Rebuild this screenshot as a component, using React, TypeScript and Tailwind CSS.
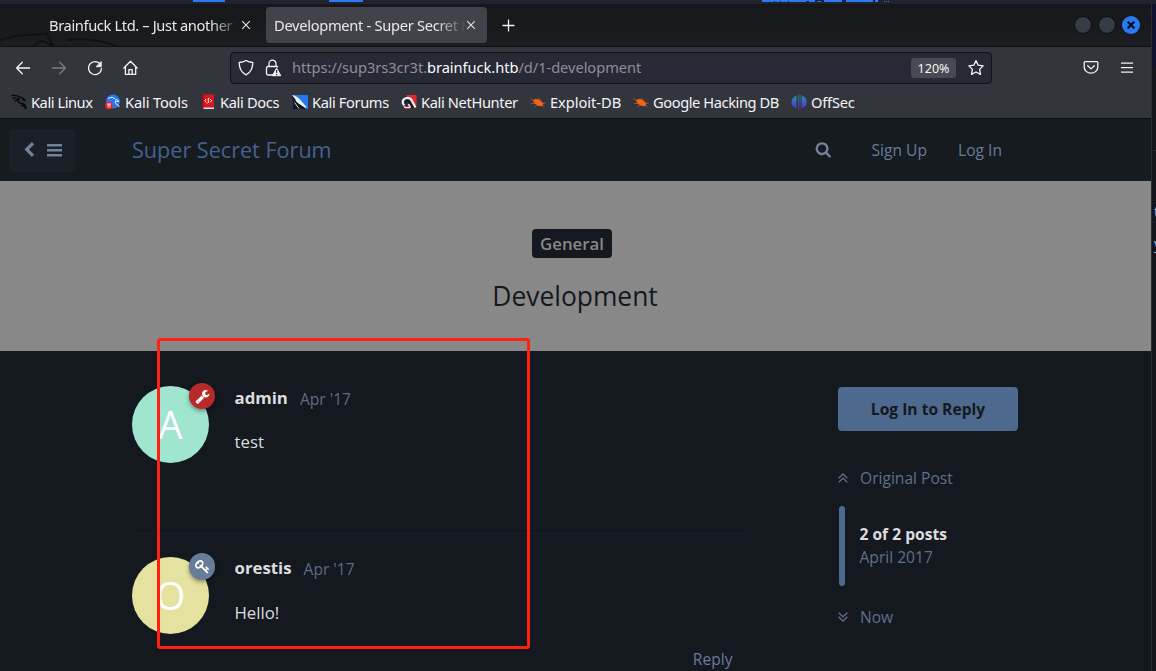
import React from "react";

const SEARCH =
  "M1216 832q0-185-131.5-316.5t-316.5-131.5-316.5 131.5-131.5 316.5 131.5 316.5 316.5 131.5 316.5-131.5 131.5-316.5zm512 832q0 52-38 90t-90 38q-54 0-90-38l-343-342q-179 124-399 124-143 0-273.5-55.5t-225-150-150-225-55.5-273.5 55.5-273.5 150-225 225-150 273.5-55.5 273.5 55.5 225 150 150 225 55.5 273.5q0 220-124 399l343 343q37 37 37 90z";
const CHEVRON =
  "M1427 301l-531 531 531 531q19 19 19 45t-19 45l-166 166q-19 19-45 19t-45-19l-742-742q-19-19-19-45t19-45l742-742q19-19 45-19t45 19l166 166q19 19 19 45t-19 45z";
const WRENCH =
  "M448 1472q0-26-19-45t-45-19-45 19-19 45 19 45 45 19 45-19 19-45zm644-420l-682 682q-37 37-90 37-52 0-91-37l-106-108q-38-36-38-90 0-53 38-91l681-681q39 98 114.5 173.5t173.5 114.5zm634-435q0 39-23 106-47 134-164.5 217.5t-258.5 83.5q-185 0-316.5-131.5t-131.5-316.5 131.5-316.5 316.5-131.5q58 0 121.5 16.5t107.5 46.5q16 11 16 28t-16 28l-293 169v224l193 107q5-3 79-48.5t135.5-81 70.5-35.5q15 0 23.5 10t8.5 25z";
const KEY =
  "M832 512q0-80-56-136t-136-56-136 56-56 136q0 42 19 83-41-19-83-19-80 0-136 56t-56 136 56 136 136 56 136-56 56-136q0-42-19-83 41 19 83 19 80 0 136-56t56-136zm851 704q0 17-49 66t-66 49q-9 0-28.5-16t-36.5-33-38.5-40-24.5-26l-96 96 220 220q28 28 28 68 0 42-39 81t-81 39q-40 0-68-28l-671-671q-176 131-365 131-163 0-265.5-102.5t-102.5-265.5q0-160 95-313t248-248 313-95q163 0 265.5 102.5t102.5 265.5q0 189-131 365l355 355 96-96q-3-3-26-24.5t-40-38.5-33-36.5-16-28.5q0-17 49-66t66-49q13 0 23 10 6 6 46 44.5t82 79.5 86.5 86 73 78 28.5 41z";

function Glyph({ d, className }: { d: string; className: string }) {
  return (
    <svg viewBox="0 0 1792 1792" fill="currentColor" className={className}>
      <path d={d} />
    </svg>
  );
}

function Line({ className, children }: { className: string; children: React.ReactNode }) {
  return (
    <svg
      viewBox="0 0 16 16"
      fill="none"
      stroke="currentColor"
      strokeWidth="1.3"
      strokeLinecap="round"
      strokeLinejoin="round"
      className={className}
    >
      {children}
    </svg>
  );
}

function Close() {
  return (
    <svg viewBox="0 0 10 10" className="size-[10px] shrink-0" stroke="#e4e4e6" strokeWidth="1.1" fill="none">
      <path d="M1.2 1.2 8.8 8.8M8.8 1.2 1.2 8.8" />
    </svg>
  );
}

function Desktop() {
  return (
    <div className="flex h-[4px] w-full shrink-0 items-start bg-[#20222e]">
      <div className="ml-[193px] h-[2px] w-[32px] bg-[#2b79f5]" />
      <div className="ml-[104px] h-[2px] w-[34px] bg-[#2b79f5]" />
      <svg className="ml-[399px] h-[2px] w-[128px]" viewBox="0 0 128 2" fill="#2b79f5">
        <path d="M0 0h53v1H0zM0 0h12v2H0zM13 0h5v2h-5zM19 0h7v2h-7zM27 0h17v2H27zM47 0h6v2h-6zM55 1h4v1h-4zM62 0h18v2H62zM84 0h27v2H84zM113 0h3v2h-3zM122 1h1v1h-1zM124 1h1v1h-1zM126 1h1v1h-1z" />
      </svg>
    </div>
  );
}

function TabBar() {
  return (
    <div className="relative flex h-[43px] items-center border-b border-[#0f1013] bg-linear-to-b from-[#16171b] to-[#1c1d21] text-[14.67px] text-[#e8e8ea]">
      <svg className="absolute bottom-0 left-0 h-[42px] w-[130px]" viewBox="0 0 130 42" fill="none">
        <path d="M0 36 18 31.500 47 29.500 53 42" stroke="#111215" strokeWidth="2" />
        <path d="M34 42 38 38 43 37 52 42M67 36q26-3 50 6" stroke="#101114" strokeWidth="2" />
      </svg>
      <div className="relative ml-[49px] flex w-[202px] items-center">
        <div className="w-[192px] mask-r-from-[84%] mask-r-to-[100%] pb-px tracking-[-0.37px] whitespace-nowrap">
          Brainfuck Ltd. – Just another
        </div>
        <Close />
      </div>
      <div className="ml-[15px] flex h-[36px] w-[221px] items-center rounded-[4px] bg-[#42434a] pl-[8px]">
        <div className="w-[192px] mask-r-from-[84%] mask-r-to-[100%] pb-px tracking-[-0.3px] whitespace-nowrap">
          Development - Super Secret F
        </div>
        <Close />
      </div>
      <svg className="ml-[15px] size-[13px]" viewBox="0 0 13 13" stroke="#f0f0f2" strokeWidth="1.300">
        <path d="M.5 6.500h12M6.500.5v12" />
      </svg>
      <div className="mr-[11px] ml-auto flex gap-[6px]">
        <div className="size-[18px] rounded-full border border-[#0b0c0f] bg-[#353b47]" />
        <div className="size-[18px] rounded-full border border-[#0b0c0f] bg-[#353b47]" />
        <div className="flex size-[18px] items-center justify-center rounded-full bg-[#2b79f5]">
          <svg viewBox="0 0 8 8" className="size-[8px]" stroke="#0b1020" strokeWidth="2.200">
            <path d="M.6.6 7.400 7.400M7.400.6.6 7.400" />
          </svg>
        </div>
      </div>
    </div>
  );
}

function Toolbar() {
  return (
    <div className="flex h-[42px] items-center bg-[#33353d] pl-[15px] text-[#f4f4f6]">
      <Line className="size-[16px]">
        <path d="M14.600 8H1.600M7.300 2.300 1.600 8l5.700 5.700" />
      </Line>
      <Line className="ml-[20px] size-[16px] text-[#7c7d83]">
        <path d="M1.400 8h13M8.700 2.300 14.400 8l-5.700 5.700" />
      </Line>
      <Line className="ml-[20px] size-[16px]">
        <path d="M12.900 3.800A6.500 6.500 0 1 0 14.500 8.500" />
        <path d="M14.300 1.800v4.900H9.400z" fill="currentColor" strokeWidth=".8" />
      </Line>
      <Line className="ml-[20px] size-[16px]">
        <path d="M.9 8 7.500 1.200 14.100 8M2.400 6.700V14.400h10.300V6.700M5.900 14.200V9.600h3.300v4.600" />
      </Line>
      <div className="ml-[91px] flex h-[32px] w-[762px] items-center rounded-[4px] border border-[#101116] bg-[#272935]">
        <Line className="ml-[7px] size-[16px]">
          <path d="M8 .5c1.800 1.200 4 1.900 6.800 2 0 6-2 10-6.800 12.300C3.200 12.500 1.200 8.500 1.200 2.500 4 2.400 6.200 1.700 8 .5z" />
        </Line>
        <svg viewBox="0 0 17 18" className="mb-px ml-[11px] h-[18px] w-[17px]" fill="none">
          <path
            d="M4 7.500V4.700a3.500 3.500 0 0 1 7 0v2.800M8 16H3a1.500 1.500 0 0 1-1.500-1.500V9A1.500 1.500 0 0 1 3 7.500h9a1.500 1.500 0 0 1 1 .8"
            stroke="#f4f4f6"
            strokeWidth="1.300"
          />
          <path d="M11.600 9.200 15.800 16.700H7.400z" fill="#f4f4f6" stroke="#f4f4f6" strokeLinejoin="round" />
          <path d="M11.600 11v3M11.600 15v1.200" stroke="#272935" strokeWidth="1.200" />
        </svg>
        <div className="ml-[10px] pb-[2px] text-[14.67px] tracking-[-0.055px] whitespace-nowrap text-[#8e8f97]">
          https://sup3rs3cr3t.<span className="text-[#fbfbfe]">brainfuck.htb</span>/d/1-development
        </div>
        <div className="ml-auto flex h-[20px] w-[45px] items-center justify-center rounded-[3px] bg-[#484a53] pt-[3px] text-[12.5px]">
          120%
        </div>
        <Line className="mr-[7px] ml-[12px] size-[16px]">
          <path d="M8 .6 10.200 5.200 15.200 5.900 11.600 9.400 12.500 14.400 8 12 3.500 14.400 4.400 9.400.8 5.900 5.800 5.200z" />
        </Line>
      </div>
      <Line className="ml-[91px] size-[16px]">
        <path d="M2.200 1.600h11.600a1 1 0 0 1 1 1V7a6.800 6.200 0 0 1-13.600 0V2.600a1 1 0 0 1 1-1zM4.700 5.700 8 8.900l3.300-3.200" />
      </Line>
      <svg viewBox="0 0 12 11" className="mb-[2px] ml-[22px] h-[11px] w-[12px]" fill="#f4f4f6">
        <path d="M0 .4h12v1.300H0zM0 4.900h12v1.300H0zM0 9.400h12v1.300H0z" />
      </svg>
    </div>
  );
}

function ExploitIcon() {
  return (
    <svg viewBox="0 0 16 16" className="size-[16px]">
      <path d="M3 6.500Q5.500 4 9 5.800l2.800 2 1.700 1.700-1 2.500Q10 12.500 7.500 11.500L4.500 9.500z" fill="#ee6418" />
      <path
        d="M.5 4.500 4 6.800M1 9.800l4-.8M8.500 3.500l.5 2.500M15.500 9l-3 .5M4.500 13l2.500-2M11 5.500l-.5 2M14.500 12.500l-2.500-1"
        stroke="#d05a1c"
        strokeWidth=".8"
      />
    </svg>
  );
}

const bookmarks: { label: string; width: string; tracking: string; icon: React.ReactNode }[] = [
  {
    label: "Kali Linux",
    width: "w-[94px]",
    tracking: "tracking-[-0.45px]",
    icon: (
      <svg viewBox="0 0 16 16" className="size-[16px]" fill="none" stroke="#08090b">
        <path d="M.5 1.500Q6 .8 9 3.200 12 3.200 14 6.500L11 5.300M1.500 4.500q5-1 6.500 1.500M3.500 7Q6 5.500 7.500 7.500" strokeWidth="1.300" />
        <path d="M8 4Q6 9 10.500 9.300 15 10 14.800 15 13.500 11.500 10 11" strokeWidth="1.600" />
      </svg>
    ),
  },
  {
    label: "Kali Tools",
    width: "w-[95px]",
    tracking: "tracking-[-0.15px]",
    icon: (
      <svg viewBox="0 0 16 16" className="size-[16px]" fill="none">
        <circle cx="8" cy="7.500" r="7" fill="#2777ef" />
        <path d="M3 4.500q5-2.500 7.500 1 2 0 3.500 2L10.500 7q-1 2.500 1.500 3.500 2 .5 2 2.500" stroke="#e9f1ff" strokeWidth="1" />
        <circle cx="4" cy="11.500" r="3.800" fill="#e5252f" />
        <path d="M2 10h4M3.300 10v3.500M4.900 10v3.500" stroke="#fff" strokeWidth=".8" />
      </svg>
    ),
  },
  {
    label: "Kali Docs",
    width: "w-[92px]",
    tracking: "tracking-[-0.35px]",
    icon: (
      <svg viewBox="0 0 16 16" className="size-[16px]" fill="none">
        <path d="M2 .5h12v13H2z" fill="#d9161d" />
        <path d="M2 13.500h12V15H2z" fill="#e9e9e9" />
        <path d="M2 .5h1.500V15H2z" fill="#8f1016" />
        <path d="M6.300 5 4.800 6.700l1.500 1.700M10.200 5l1.500 1.700-1.500 1.700M9.400 4Q7.500 4.500 8.300 6.500T7.300 9.500" stroke="#fff" />
      </svg>
    ),
  },
  {
    label: "Kali Forums",
    width: "w-[109px]",
    tracking: "tracking-[-0.38px]",
    icon: (
      <svg viewBox="0 0 16 16" className="size-[16px]">
        <path d="M0 1h16v14H1z" fill="#2777ef" />
        <path d="M0 1 6 6l8 9H1z" fill="#15171d" />
        <path d="M0 1q4.500.5 8 4.500l6.500 7.500-1 1L6.500 9.500Q3 7 3.500 5.500z" fill="#eef2f5" />
        <path d="M2.500 8.500l4.500 6" stroke="#cfd6dc" />
      </svg>
    ),
  },
  {
    label: "Kali NetHunter",
    width: "w-[129px]",
    tracking: "tracking-[-0.37px]",
    icon: (
      <svg viewBox="0 0 16 16" className="size-[16px]" fill="none">
        <path d="M5 1h10.500v12z" fill="#e52630" />
        <path d="M3 11.500Q-.5 5.500 5.500 4q4-.5 5.500 3l3.500 6.500" stroke="#f4f4f4" strokeWidth="2.200" />
        <path d="M4.500 9.500q0-3.500 3-2.500l5 7" stroke="#16171b" strokeWidth="1.800" />
        <path d="M3 12.500q2.500 2.500 6 .5L7.500 10" stroke="#f0e4e4" strokeWidth="1.600" />
        <path d="M4.500 14.500h4" stroke="#e52630" strokeWidth="1.200" />
      </svg>
    ),
  },
  { label: "Exploit-DB", width: "w-[103px]", tracking: "tracking-[-0.04px]", icon: <ExploitIcon /> },
  { label: "Google Hacking DB", width: "w-[158px]", tracking: "tracking-[-0.42px]", icon: <ExploitIcon /> },
  {
    label: "OffSec",
    width: "w-[80px]",
    tracking: "tracking-[-0.2px]",
    icon: (
      <svg viewBox="0 0 16 16" className="size-[16px]">
        <defs>
          <linearGradient id="offsec" x1="0" y1="0" x2="0" y2="1">
            <stop offset="0" stopColor="#159bab" />
            <stop offset="1" stopColor="#5f2ad0" />
          </linearGradient>
        </defs>
        <path
          d="M5.500 1.500v13Q.5 12.500.5 8t5-6.500zM7 .8h.7v14.400H7zM8.700.8h.7v14.400h-.7zM10.700 1.500q5 2 5 6.500t-5 6.500z"
          fill="url(#offsec)"
        />
      </svg>
    ),
  },
];

function Bookmarks() {
  return (
    <div className="flex h-[30px] items-center border-b border-[#0c0d10] bg-[#33353d] pb-[3px] pl-[11px] text-[14.67px] text-[#f4f4f6]">
      {bookmarks.map((b) => (
        <div key={b.label} className={`flex shrink-0 items-center gap-[4px] whitespace-nowrap ${b.width} ${b.tracking}`}>
          {b.icon}
          {b.label}
        </div>
      ))}
    </div>
  );
}

function ForumHeader() {
  return (
    <div className="flex h-[62px] items-center bg-[#161b1f] text-[15.6px] text-[#667c99]">
      <div className="ml-[9px] flex h-[43px] w-[66px] items-center rounded-[4px] bg-[#1b1f28] pl-[12px] text-[#72829b]">
        <Glyph d={CHEVRON} className="size-[16px]" />
        <svg viewBox="0 0 15 13" className="ml-[10px] h-[13px] w-[15px]" fill="currentColor">
          <path d="M0 0h15v2.500H0zM0 5h15v2.500H0zM0 10h15v2.500H0z" />
        </svg>
      </div>
      <div className="ml-[57px] w-[683px] text-[21.6px] text-[#43628f]">Super Secret Forum</div>
      <Glyph d={SEARCH} className="mb-px size-[16.500px] text-[#72829b]" />
      <div className="ml-[40px] w-[86.500px] pt-[2px]">Sign Up</div>
      <div className="pt-[2px]">Log In</div>
    </div>
  );
}

function Post({
  letter,
  color,
  badgeStyle,
  badge,
  name,
  text,
  bylineStyle,
  dateStyle,
}: {
  letter: string;
  color: string;
  badgeStyle: string;
  badge: string;
  name: string;
  text: string;
  bylineStyle: string;
  dateStyle: string;
}) {
  return (
    <div className="flex">
      <div className={`relative flex size-[77px] items-center justify-center rounded-full text-[38.4px] text-white ${color}`}>
        <span className="pt-[1px]">{letter}</span>
        <div
          className={`absolute -top-[3px] left-[57px] flex items-center justify-center rounded-full text-white shadow-[0_2px_4px_rgba(0,0,0,0.4)] ${badgeStyle}`}
        >
          <Glyph d={badge} className="size-[15px]" />
        </div>
      </div>
      <div className="ml-[25.500px] flex flex-col">
        <div className={`flex h-[24px] gap-[12px] text-[15.6px] leading-[24px] text-[#5d6b82] ${bylineStyle}`}>
          <span className="text-[16.8px] font-bold text-[#dddddd]">{name}</span>
          <span className={dateStyle}>Apr '17</span>
        </div>
        <div className="h-[24px] text-[16.8px] leading-[24px] text-[#dddddd]">{text}</div>
      </div>
    </div>
  );
}

function Chevrons({ down }: { down?: boolean }) {
  return (
    <svg
      viewBox="0 0 10 10"
      className={`size-[10px] ${down ? "rotate-180" : ""}`}
      fill="none"
      stroke="currentColor"
      strokeWidth="1.300"
    >
      <path d="M.6 5.200 5 1 9.400 5.200M.6 9.400 5 5.200 9.400 9.400" />
    </svg>
  );
}

function Forum() {
  return (
    <div className="flex h-[552px] flex-col overflow-hidden font-['Open_Sans',sans-serif]">
      <ForumHeader />
      <div className="flex h-[170px] shrink-0 flex-col items-center bg-[#888888] pt-[48px] text-[#141920]">
        <div className="mr-[7px] flex h-[29px] w-[80px] items-center justify-center rounded-[4px] bg-[#141920] text-[16.8px] font-semibold text-[#888888]">
          General
        </div>
        <div className="mt-[20px] mr-px text-[26.4px] leading-[36px]">Development</div>
      </div>
      <div className="flex min-h-0 flex-1 bg-[#141920] pl-[132px]">
        <div className="flex w-[616px] shrink-0 flex-col">
          <div className="h-[183px] border-b border-[#191e27] pt-[35px]">
            <Post
              letter="A"
              color="bg-[#a0e5cf]"
              badgeStyle="size-[26px] bg-[#b72a2a]"
              badge={WRENCH}
              name="admin"
              text="test"
              bylineStyle="mb-[20px]"
              dateStyle="pt-px"
            />
          </div>
          <div className="pt-[23px]">
            <Post
              letter="O"
              color="bg-[#e5e2a0]"
              badgeStyle="-mt-px h-[27px] w-[26px] bg-[#667c99]"
              badge={KEY}
              name="orestis"
              text="Hello!"
              bylineStyle="-mt-px mb-[21px]"
              dateStyle="pt-px"
            />
          </div>
          <div className="mt-[14px] mr-[15.500px] self-end text-[15.6px] leading-[22px] text-[#667c99]">Reply</div>
        </div>
        <div className="ml-[90px] flex w-[180px] flex-col pt-[36px] text-[15.6px] text-[#5f7089]">
          <div className="flex h-[44px] items-center justify-center rounded-[4px] bg-[#4d698e] pt-px font-bold text-[#141920]">
            Log In to Reply
          </div>
          <div className="mt-[35px] flex h-[24px] items-center gap-[12px]">
            <Chevrons />
            <span className="pt-[2px]">Original Post</span>
          </div>
          <div className="mt-[16px] ml-[1px] flex h-[80px] items-center">
            <div className="h-[80px] w-[6px] rounded-full bg-[#4d698e]" />
            <div className="ml-[14.500px] leading-[23px]">
              <div className="font-bold text-[#dddddd]">2 of 2 posts</div>
              <div>April 2017</div>
            </div>
          </div>
          <div className="mt-[19px] flex h-[24px] items-center gap-[12px]">
            <Chevrons down />
            <span className="pt-[2px]">Now</span>
          </div>
        </div>
      </div>
    </div>
  );
}

export default function App() {
  return (
    <div className="relative flex h-[671px] w-[1156px] flex-col overflow-hidden bg-[#14161f] font-['Noto_Sans',sans-serif]">
      <Desktop />
      <div className="flex min-h-0 flex-1">
        <div className="flex w-[1151px] shrink-0 flex-col overflow-hidden rounded-t-[6px]">
          <TabBar />
          <Toolbar />
          <Bookmarks />
          <Forum />
        </div>
        <div className="flex w-[5px] flex-col overflow-hidden border-l border-[#2b2d35] bg-[#14151d] text-[14px] leading-[20px] text-[#8db8dc]">
          <div className="ml-px h-[62px] bg-[#101034]" />
          <div className="ml-px h-[85px] border-b border-[#2b2d35]" />
          <div className="mt-[51px] ml-[2px]">t</div>
          <div className="mt-[12px] ml-[2px]">y</div>
        </div>
      </div>
      <div className="absolute top-[338px] left-[157px] h-[311px] w-[373px] rounded-[3px] border-3 border-[#ff2012]" />
    </div>
  );
}
